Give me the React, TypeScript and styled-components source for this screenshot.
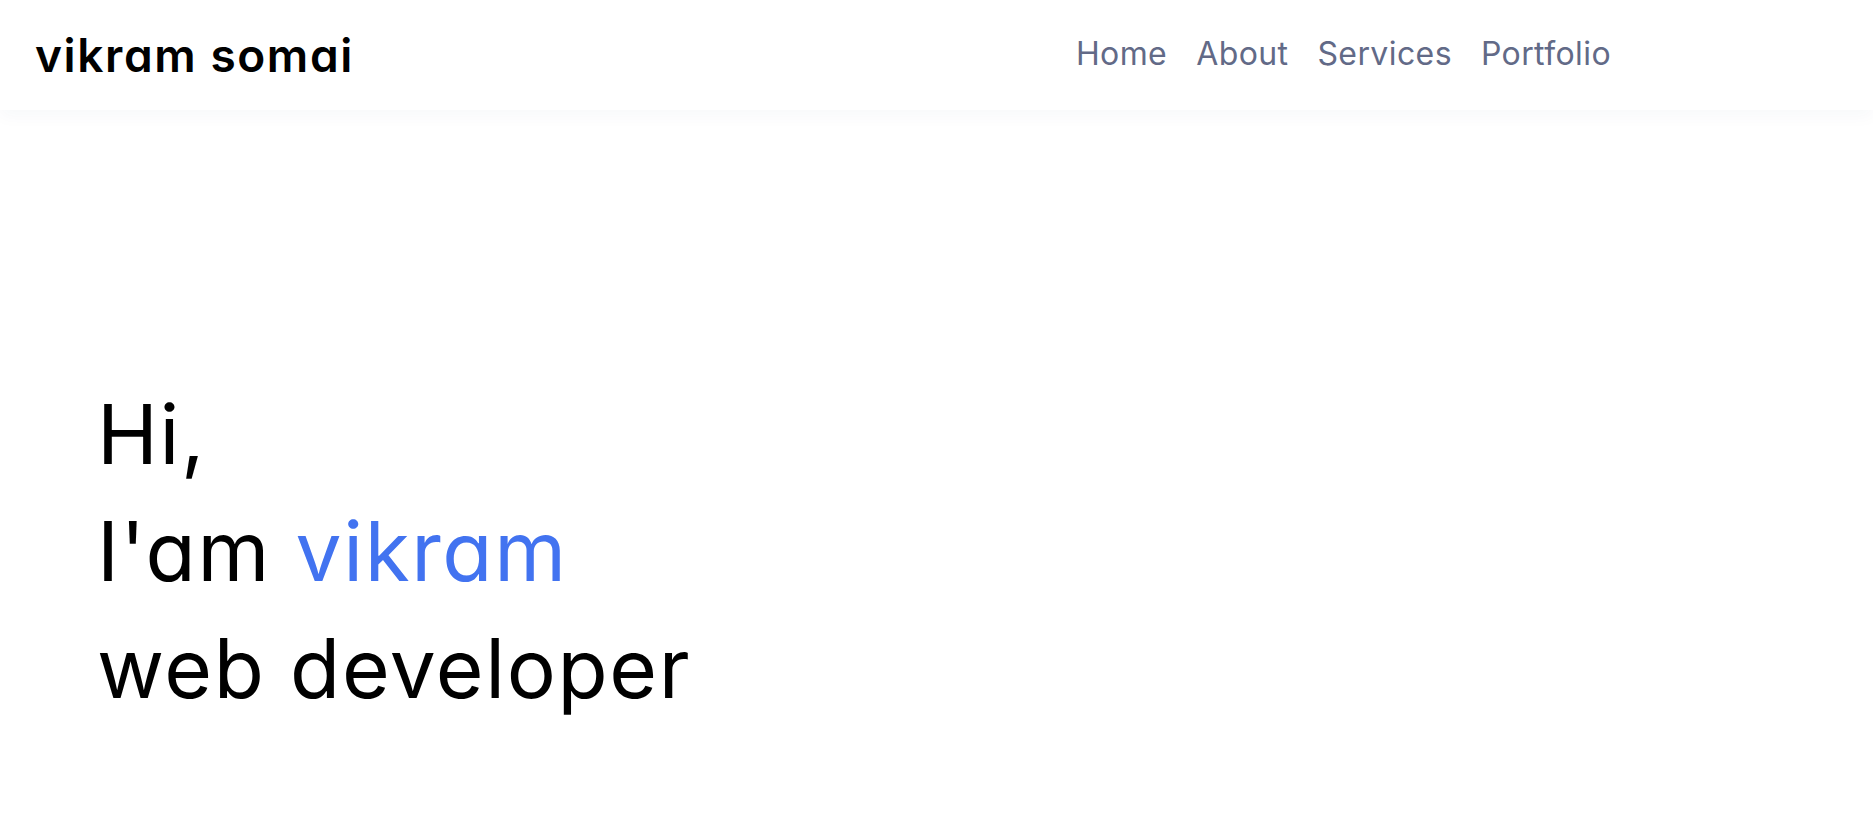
import React from "react";
import styled, { createGlobalStyle } from "styled-components";

const Global = createGlobalStyle`
  * { box-sizing: border-box; margin: 0; padding: 0; }
  html, body { background: #ffffff; }
  body {
    font-family: "Inter", "Noto Sans", sans-serif;
    font-feature-settings: "cv11" 1;
    color: #000;
  }
`;

const Page = styled.div`
  min-height: 822px;
  display: flex;
  flex-direction: column;
`;

const Header = styled.header`
  height: 110px;
  display: flex;
  align-items: center;
  justify-content: space-between;
  padding: 0 262px 0 35px;
  background: #fff;
  box-shadow: 0 6px 16px rgba(40, 50, 110, 0.035);
  position: relative;
  z-index: 1;
`;

const Logo = styled.a`
  font-size: 46px;
  font-weight: 600;
  color: #000;
  text-decoration: none;
  letter-spacing: 1.6px;
`;

const NavList = styled.ul`
  display: flex;
  list-style: none;
  gap: 29px;
  margin-top: -4px;
`;

const NavLink = styled.a`
  font-size: 32px;
  font-weight: 400;
  color: #626a87;
  text-decoration: none;
  letter-spacing: 0.4px;
`;

const Hero = styled.section`
  flex: 1;
  display: flex;
  flex-direction: column;
  justify-content: flex-start;
  padding: 266px 0 0 97px;
`;

const Line = styled.h1`
  font-size: 82px;
  font-weight: 400;
  line-height: 117px;
  letter-spacing: 1.6px;
  color: #000;
`;

const Accent = styled.span`
  color: #4273f0;
`;

const links = ["Home", "About", "Services", "Portfolio"];

export default function App() {
  return (
    <Page>
      <Global />
      <Header>
        <Logo href="#">vikram somai</Logo>
        <nav>
          <NavList>
            {links.map((l) => (
              <li key={l}>
                <NavLink href="#">{l}</NavLink>
              </li>
            ))}
          </NavList>
        </nav>
      </Header>
      <Hero>
        <Line>Hi,</Line>
        <Line>
          I'am <Accent>vikram</Accent>
        </Line>
        <Line>web developer</Line>
      </Hero>
    </Page>
  );
}
